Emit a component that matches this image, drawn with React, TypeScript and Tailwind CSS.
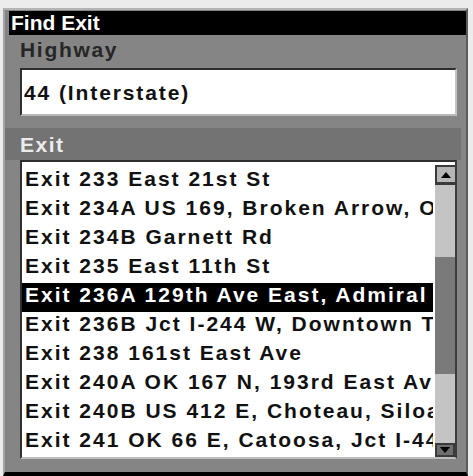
import React from 'react';

const exits = [
    'Exit 233 East 21st St',
    'Exit 234A US 169, Broken Arrow, Owasso',
    'Exit 234B Garnett Rd',
    'Exit 235 East 11th St',
    'Exit 236A 129th Ave East, Admiral Pl',
    'Exit 236B Jct I-244 W, Downtown Tulsa',
    'Exit 238 161st East Ave',
    'Exit 240A OK 167 N, 193rd East Ave',
    'Exit 240B US 412 E, Choteau, Siloam Springs',
    'Exit 241 OK 66 E, Catoosa, Jct I-44 E',
];

const SELECTED = 4;

function Arrow({ up }: { up: boolean }) {
    return (
        <svg width="10" height="6" viewBox="0 0 10 6">
            <polygon points={up ? '0,6 10,6 5,0' : '0,0 10,0 5,6'} fill="#000" />
        </svg>
    );
}

export default function App() {
    const font = { fontFamily: '"Liberation Sans", Arial, sans-serif' };

    return (
        <div className="h-[476px] w-[473px] overflow-hidden bg-[#ececec] pl-[3px] pt-[8px]" style={font}>
            <div className="flex h-[468px] w-[465px] flex-col border-b-4 border-l-2 border-r-2 border-t-2 border-b-black border-l-[#a4a4a4] border-r-[#5c5c5c] border-t-[#b4b4b4] bg-[#858585]">
                {/* title bar */}
                <div className="ml-[4px] mt-[1px] h-[24px] bg-black pl-[2px] text-[21px] font-bold leading-[24px] text-white">
                    Find Exit
                </div>

                {/* highway */}
                <div className="pl-[15px] pr-[9px]">
                    <div className="mt-[3px] h-[24px] text-[21px] font-bold leading-[24px] tracking-[1.7px] text-[#262626]">
                        Highway
                    </div>
                    <div className="mt-[6px] h-[48px] border-b-2 border-l-2 border-r-2 border-t-2 border-b-[#b8b8b8] border-l-[#2e2e2e] border-r-[#c4c4c4] border-t-[#2e2e2e] bg-white pl-[2px] pt-[11px]">
                        <div className="text-[21px] font-bold leading-[24px] tracking-[1.9px] text-[#111]">44 (Interstate)</div>
                    </div>
                </div>

                {/* exit label band */}
                <div className="mr-[5px] mt-[12px] h-[32px] bg-[#737373] pl-[15px] pt-[5px] text-[21px] font-bold leading-[24px] tracking-[1.5px] text-[#ececec]">
                    Exit
                </div>

                {/* exit list */}
                <div className="ml-[15px] mr-[9px] flex h-[299px] border-b-2 border-l-2 border-r-2 border-t-2 border-b-[#bdbdbd] border-l-[#2e2e2e] border-r-[#3c3c3c] border-t-[#2e2e2e] bg-white">
                    <div className="w-[413px] overflow-hidden pr-[2px] pt-[5px]">
                        {exits.map((exit, i) => (
                            <div
                                key={exit}
                                className={`h-[29px] overflow-hidden whitespace-nowrap pl-[3px] text-[21px] font-bold leading-[24px] tracking-[2px] ${i === SELECTED ? 'bg-black text-white' : 'text-[#111]'}`}
                            >
                                {exit}
                            </div>
                        ))}
                    </div>

                    {/* scrollbar */}
                    <div className="flex w-[20px] flex-col pt-[3px]">
                        <div className="flex h-[20px] items-center justify-center border-b-[3px] border-l-2 border-t-2 border-[#3a3a3a] bg-[#b6b6b6]">
                            <Arrow up />
                        </div>
                        <div className="h-[72px] bg-[#c4c4c4]" />
                        <div className="h-[117px] bg-[#7a7a7a]" />
                        <div className="h-[69px] bg-[#c4c4c4]" />
                        <div className="flex h-[14px] items-center justify-center border-2 border-[#3a3a3a] bg-[#6e6e6e]">
                            <Arrow up={false} />
                        </div>
                    </div>
                </div>
            </div>
        </div>
    );
}
